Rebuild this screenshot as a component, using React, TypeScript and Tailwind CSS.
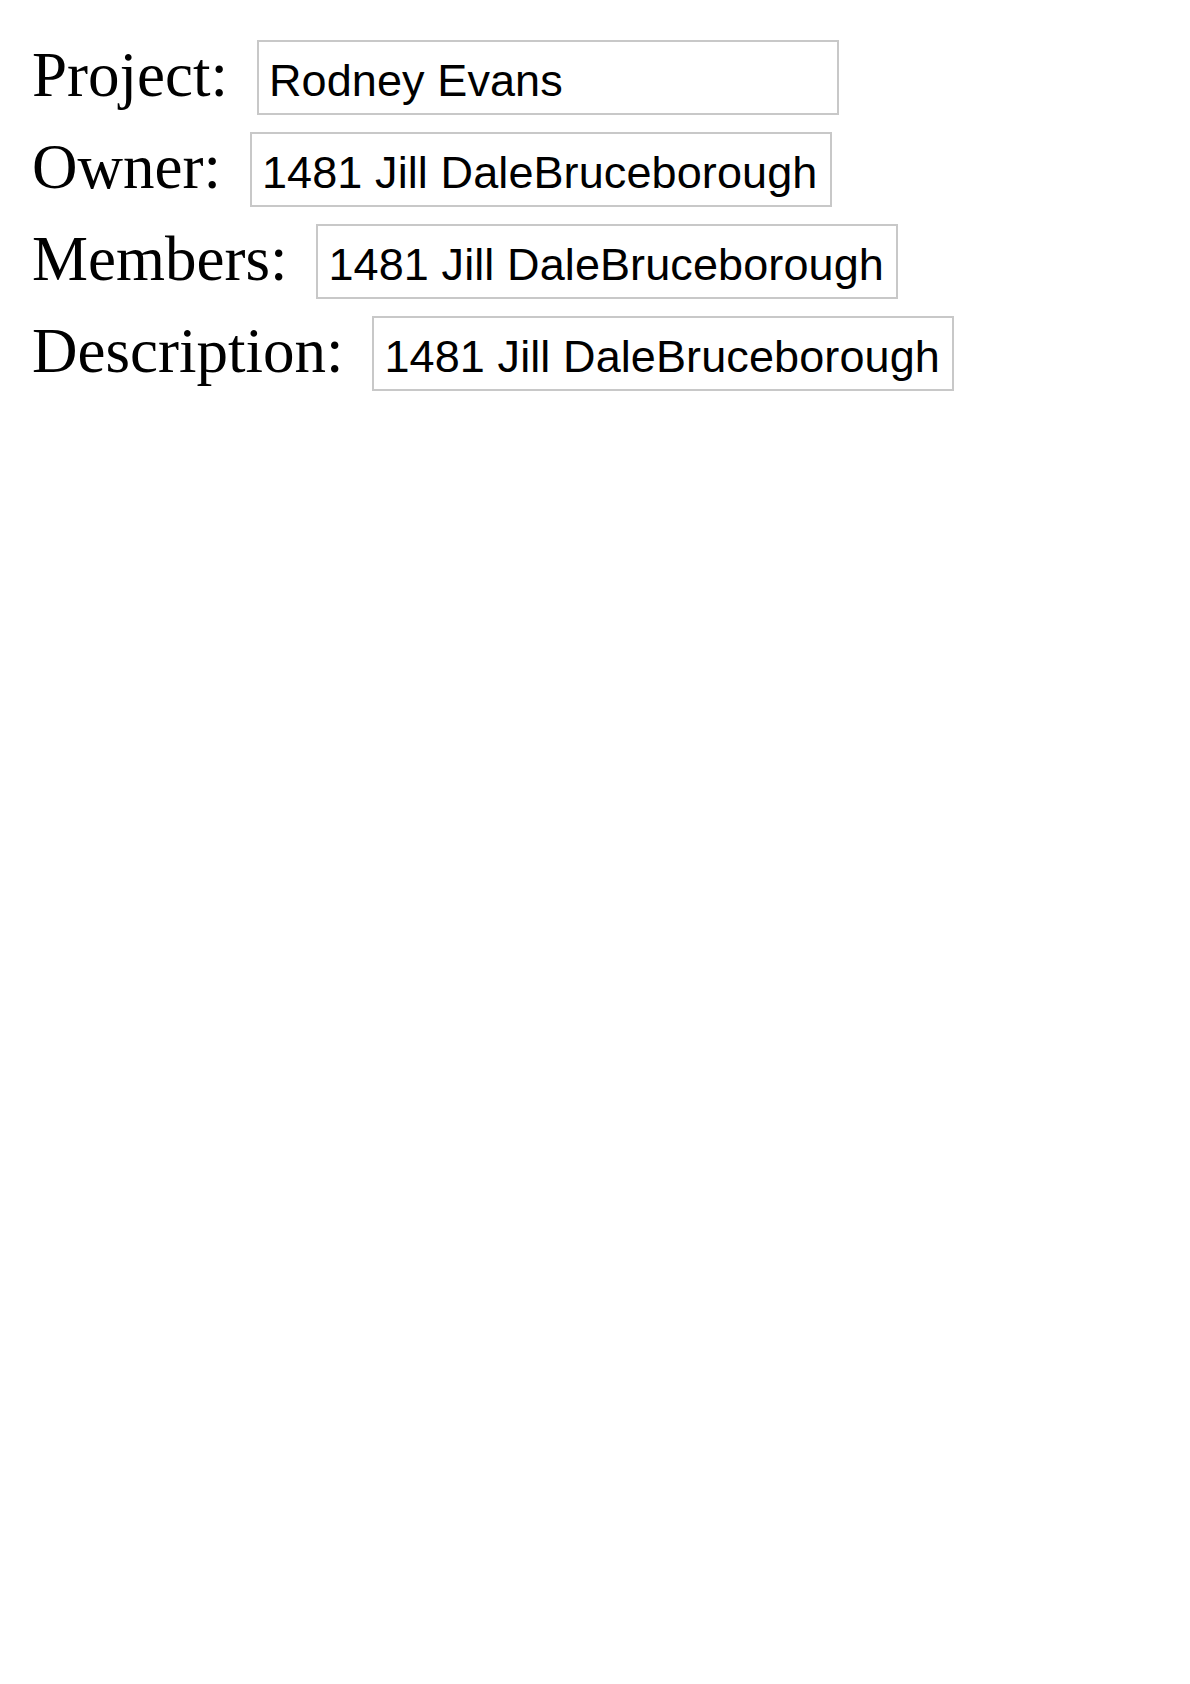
const fields = [
  { label: 'Project:', value: 'Rodney Evans' },
  { label: 'Owner:', value: '1481 Jill DaleBruceborough' },
  { label: 'Members:', value: '1481 Jill DaleBruceborough' },
  { label: 'Description:', value: '1481 Jill DaleBruceborough' },
];

const App = () => {
  return (
    <div className="min-h-screen bg-white pl-8 pt-10">
      <form className="flex flex-col gap-[17px]">
        {fields.map((f) => (
          <div key={f.label} className="flex items-baseline gap-[29px]">
            <label className="font-['Liberation_Serif',serif] text-[63px] leading-none text-black">
              {f.label}
            </label>
            <input
              type="text"
              readOnly
              value={f.value}
              className="h-[75px] w-[582px] border-2 border-[#c8c8c8] pl-[10px] pr-[10px] pt-[6px] font-['Liberation_Sans',Arial,sans-serif] text-[45px] tracking-[0.1px] text-black outline-none"
            />
          </div>
        ))}
      </form>
    </div>
  );
};

export default App;
